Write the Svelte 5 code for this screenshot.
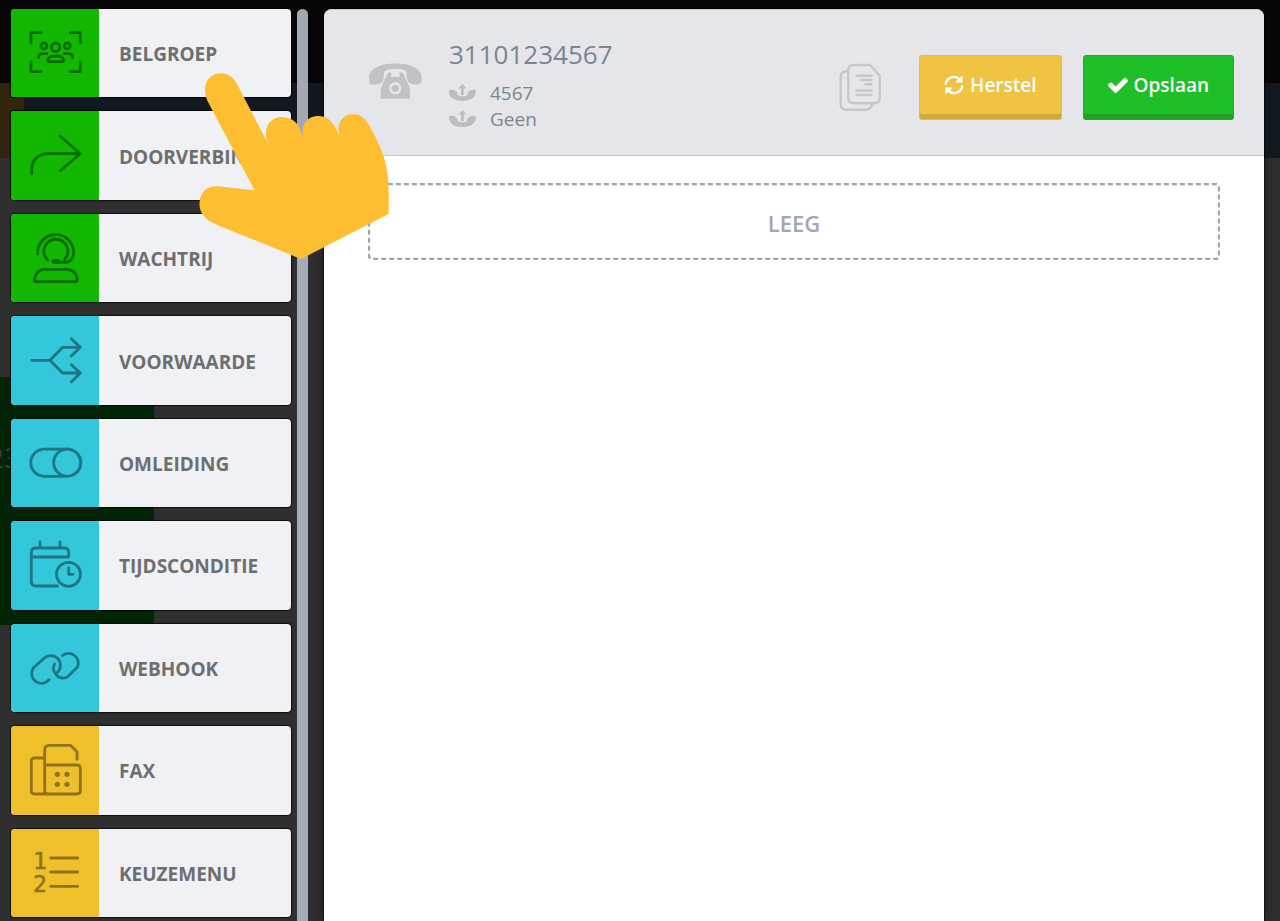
<script>
  const modules = [
    { name: 'BELGROEP', icon: 'group', color: 'green' },
    { name: 'DOORVERBINDEN', icon: 'forward', color: 'green' },
    { name: 'WACHTRIJ', icon: 'agent', color: 'green' },
    { name: 'VOORWAARDE', icon: 'split', color: 'teal' },
    { name: 'OMLEIDING', icon: 'toggle', color: 'teal' },
    { name: 'TIJDSCONDITIE', icon: 'calendar', color: 'teal' },
    { name: 'WEBHOOK', icon: 'link', color: 'teal' },
    { name: 'FAX', icon: 'fax', color: 'yellow' },
    { name: 'KEUZEMENU', icon: 'list', color: 'yellow' },
  ];

  const icons = {
    group:
      'M20 33.5V23.7H30M59.3 23.7H69.3V33.5M69.3 53V62.7H59.3M30 62.7H20V53' +
      'M30 37a3 3 0 1 0 6 0a3 3 0 1 0-6 0M53.3 37a3 3 0 1 0 6 0a3 3 0 1 0-6 0' +
      'M40.4 38.3a4.3 4.3 0 1 0 8.6 0a4.3 4.3 0 1 0-8.6 0' +
      'M27.7 48.7C27.7 46 29 44.7 31.5 44.7H36M53.4 44.7H57.9C60.4 44.7 61.7 46 61.7 48.7' +
      'M38 52.7C36.5 52.7 36.5 51.5 37 50.5C38 48 39.5 47.2 42 47.2H47.5C50 47.2 51.5 48 52.5 50.5C53 51.5 53 52.7 51.5 52.7Z',
    forward: 'M20.7 61.5V57.5C20.7 48 27.7 41.7 37.3 41.7H69.3M49.3 24.3L69.3 41.7L49.3 58.7',
    agent:
      'M26.7 39.8A18 18 0 1 1 62.7 37.7C62.7 44.5 59 48.3 54 48.3H46' +
      'M36.7 46A12 12 0 1 1 53.5 45.6' +
      'M25 67.7C23.5 67.7 23.2 66.5 23.5 65C24.7 58.5 28.5 55.3 34 55.3H55.7C61 55.3 65 58.5 66.2 65C66.5 66.5 66 67.7 64.7 67.7Z',
    split:
      'M20.7 43.3H39L51.7 30.3H69.3M60.3 21.7L69.3 30.3L60.3 39' +
      'M39 43.3L51.7 56H69.3M60.3 47.7L69.3 56L60.3 65',
    toggle:
      'M33.4 30.1H56A13.6 13.6 0 0 1 56 57.3H33.4A13.6 13.6 0 0 1 33.4 30.1Z' +
      'M42.7 43.7a13.6 13.6 0 1 0 27.2 0a13.6 13.6 0 1 0-27.2 0',
    calendar:
      'M46.5 65H25C22 65 20.3 63.5 20.3 60.5V31.5C20.3 28.5 22 27 25 27H53C56 27 57.7 28.5 57.7 31.5V36H20.3' +
      'M29 21V27M49 21V27M45.5 53.3a12 12 0 1 0 24 0a12 12 0 1 0-24 0M57.7 47V53.3H62',
    link:
      'M38 55.7A9.7 9.7 0 0 1 22.8 43.5L33.1 34.2A9.7 9.7 0 0 1 46.5 48.3' +
      'M51.5 31.5A9.7 9.7 0 0 1 66.3 43.3L56.3 53A9.7 9.7 0 0 1 43.5 40',
    fax:
      'M33.7 32H23.5C21.5 32 20.3 33.2 20.3 35.2V64.8C20.3 66.8 21.5 68 23.5 68H65.8C67.8 68 69.3 66.8 69.3 64.8V42.2C69.3 40.2 67.8 39 65.8 39H33.7' +
      'M37 68C35 68 33.7 66.5 33.7 64.5V24C33.7 21 35.5 19.3 38.5 19.3H59.5L66 25.7V33.3',
    list: 'M39.7 29H66.7M39.7 43H66.7M39.7 57.3H66.7',
  };

  const faxDots = [[46.3, 48.3], [56, 48.3], [46.3, 58.3], [56, 58.3]];

  const number = '31101234567';
  const extensions = ['4567', 'Geen'];
</script>

<div class="app">
  <div class="backdrop" aria-hidden="true">
    <div class="tab"></div>
    <div class="tile">23</div>
  </div>

  <aside>
    <div class="modules">
      {#each modules as item}
        <button class="module">
          <span class="tileicon {item.color}">
            <svg viewBox="0 0 88 88">
              <path d={icons[item.icon]} />
              {#if item.icon === 'agent'}
                <ellipse class="solid" cx="45" cy="47.3" rx="4.5" ry="2.6" />
              {:else if item.icon === 'fax'}
                {#each faxDots as [x, y]}
                  <circle class="solid" cx={x} cy={y} r="2.6" />
                {/each}
              {:else if item.icon === 'list'}
                <text x="22" y="40">1</text>
                <text x="22" y="63">2</text>
              {/if}
            </svg>
          </span>
          <span class="name">{item.name}</span>
        </button>
      {/each}
    </div>
    <div class="scrollbar"></div>
  </aside>

  <main>
    <header>
      <svg class="phone" viewBox="0 0 54 36">
        <path d="M1 15C1 5 13 .5 27.3 .5S53.7 5 53.7 15C53.7 19.5 53 21.5 50 21.5C44 21.5 39.5 20.5 39 16L38.5 9.5C38 7 34 6 27.3 6S16.500 7 16 9.5L15.5 16C15 20.5 10.5 21.5 4.5 21.5C1.5 21.5 1 19.5 1 15Z" />
        <path fill-rule="evenodd" d="M20 9.5H23.2V14H31.500V9.5H34.7L41 23C41.8 25 42 26.5 42 28.5V35.7H12.7V28.5C12.7 26.5 13 25 13.7 23ZM27.3 19.2a6.200 6.200 0 1 0 .01 0ZM27.3 21.7a3.700 3.700 0 1 1-.01 0Z" />
      </svg>
      <div class="info">
        <h1>{number}</h1>
        {#each extensions as ext}
          <div class="ext">
            <svg viewBox="0 0 27 18">
              <path d="M13.4 0L17.5 4.5H14.8V11H12V4.5H9.3ZM0 8C0 6 1.2 5.5 3 5.7C6 6 8.5 7.5 8.5 10C8.5 11.8 10.5 12.3 13.5 12.3S18.5 11.8 18.5 10C18.5 7.5 21 6 24 5.7C25.8 5.5 27 6 27 8C27 13 21.5 17 13.5 17S0 13 0 8Z" />
            </svg>
            <span>{ext}</span>
          </div>
        {/each}
      </div>
      <div class="actions">
        <button class="copy" aria-label="Kopiëren">
          <svg viewBox="0 0 42 48">
            <path d="M9 8.3H7C4 8.3 1.7 10.3 1.7 13.5V41.5C1.7 44.7 4 46.7 7 46.7H27C30 46.7 32 45.5 33.5 41" />
            <path d="M14.5 2H31L40.7 12.7V35C40.7 38.2 38.5 40.2 35.5 40.2H14.5C11.5 40.2 9.3 38.2 9.3 35V7C9.3 4 11.5 2 14.5 2Z" />
            <path d="M17.5 12.7H32.5M22 17H32.5M26.5 21.3H32.5M17.5 27.5H32.5M17.5 32H32.5" />
          </svg>
        </button>
        <button class="btn reset">
          <svg viewBox="0 0 20 20">
            <path class="arc" d="M1.7 9.5A8 8 0 0 1 15.8 4.8M18.3 10.5A8 8 0 0 1 4.2 15.2" />
            <path d="M18.5 .5V7.5H11.2ZM1.5 19.5V12.5H8.8Z" />
          </svg>
          Herstel
        </button>
        <button class="btn save">
          <svg viewBox="121 240 1550 1310">
            <path d="M1671 566q0 40-28 68l-724 724-136 136q-28 28-68 28t-68-28l-136-136-362-362q-28-28-28-68t28-68l136-136q28-28 68-28t68 28l294 295 656-657q28-28 68-28t68 28l136 136q28 28 28 68z" />
          </svg>
          Opslaan
        </button>
      </div>
    </header>

    <section>
      <div class="dropzone">
        <svg><rect x="1" y="1" rx="3" /></svg>
        LEEG
      </div>
    </section>
  </main>

  <svg class="hand" viewBox="199 73 190 186">
    <path d="M207.5 101C203 91 204 78 216 74C225 71.5 232 75 237 84L268.5 144.5C262 130 268 118 281 117C290 117 296 121 299 127L304 138C300 126 306 117 317 116C325 115.5 331 119 335 127L340.5 138C335 126 341 115 352 114C359 114 364 117 368 123C376 138 382 149 385 161C389 176 389 192 388.5 214L301 259L215 224C205 220 199 212 199.5 203C200 192 207 185.5 218 186.3L254.5 190.3Z" />
  </svg>
</div>

<style>
  :global(body) {
    background: #2f2f2f;
  }

  .app {
    position: relative;
    display: flex;
    min-height: 100vh;
    overflow: hidden;
    font-family: 'Open Sans', 'Noto Sans', sans-serif;
  }

  button {
    border: none;
    font-family: inherit;
    cursor: pointer;
  }

  .backdrop {
    position: absolute;
    inset: 0;
    background: linear-gradient(#070707 83px, #121a20 83px, #121a20 158px, #2f2f2f 158px);
  }

  .tab {
    position: absolute;
    top: 83px;
    left: 0;
    width: 24px;
    height: 75px;
    background: #33240d;
  }

  .tile {
    position: absolute;
    top: 377px;
    left: 0;
    width: 154px;
    height: 248px;
    background: #022508;
    color: #30403a;
    font-size: 28px;
    line-height: 160px;
    text-indent: -12px;
  }

  aside {
    position: relative;
    display: flex;
    gap: 6px;
    padding: 9px 16px 0 11px;
  }

  .modules {
    display: grid;
    grid-auto-rows: 1fr;
    gap: 14px;
    width: 280px;
    padding-bottom: 4px;
  }

  .module {
    display: flex;
    align-items: stretch;
    min-height: 88px;
    padding: 0;
    border-radius: 4px;
    background: #f0f1f4;
    box-shadow: 0 0 1px 1px rgba(0, 0, 0, 0.7);
    overflow: hidden;
    text-align: left;
  }

  .tileicon {
    display: flex;
    align-items: center;
    width: 88px;
  }

  .green { background: #12b700; }
  .teal { background: #32c7da; }
  .yellow { background: #f0c02c; }

  .tileicon svg {
    width: 88px;
    height: 88px;
    fill: none;
    stroke: #000;
    stroke-width: 2.8;
    stroke-linecap: round;
    stroke-linejoin: round;
    opacity: 0.4;
  }

  .tileicon .solid {
    fill: #000;
    stroke: none;
  }

  .tileicon text {
    fill: #000;
    stroke-width: 0.6;
    font: 23px 'DejaVu Sans Mono', monospace;
  }

  .name {
    align-self: center;
    padding: 2px 0 0 20px;
    color: #6c6e70;
    font-size: 19px;
    font-weight: 700;
    line-height: 26px;
  }

  .scrollbar {
    width: 11px;
    border-radius: 6px 6px 0 0;
    background: rgba(180, 186, 196, 0.9);
  }

  main {
    position: relative;
    flex: 1;
    margin: 9px 16px 0 0;
    border-radius: 8px 8px 0 0;
    background: #fff;
    box-shadow: 0 0 12px rgba(0, 0, 0, 0.5), 0 0 0 1px rgba(0, 0, 0, 0.5);
  }

  header {
    display: flex;
    align-items: center;
    padding: 24px 30px 23px 44px;
    border-top: 1px solid #cdced1;
    border-bottom: 1px solid #c5c7ca;
    border-radius: 8px 8px 0 0;
    background: #e4e6ea;
  }

  .phone {
    width: 54px;
    height: 36px;
    margin-bottom: 4px;
    fill: #c0c2c6;
  }

  .info {
    flex: 1;
    padding-left: 27px;
    color: #7b8590;
  }

  h1 {
    margin: 0 0 6px;
    font-size: 26px;
    font-weight: 400;
    line-height: 40px;
  }

  .ext {
    display: flex;
    align-items: center;
    gap: 14px;
    font-size: 19px;
    line-height: 26px;
  }

  .ext svg {
    width: 27px;
    height: 18px;
    fill: #bcbdc0;
  }

  .actions {
    display: flex;
    align-items: center;
    margin-top: 8px;
  }

  .copy {
    margin-right: 38px;
    padding: 0;
    background: none;
  }

  .copy svg {
    display: block;
    width: 42px;
    height: 48px;
    fill: none;
    stroke: #c5c7cb;
    stroke-width: 2.4;
    stroke-linecap: round;
  }

  .btn {
    display: flex;
    align-items: center;
    gap: 6px;
    padding: 17px 25px 22px;
    border-radius: 4px;
    color: #fff;
    font-size: 19px;
    font-weight: 600;
    line-height: 26px;
  }

  .btn svg {
    width: 20px;
    height: 20px;
    fill: #fff;
  }

  .btn .arc {
    fill: none;
    stroke: #fff;
    stroke-width: 2.4;
  }

  .reset {
    margin-right: 21px;
    background: #f0c342;
    box-shadow: inset 0 0 0 1px #f0bc2c, inset 0 -6px #cfa93b;
  }

  .save {
    background: #1ebf27;
    box-shadow: inset 0 0 0 1px #12b51c, inset 0 -6px #1ca524;
  }

  section {
    padding: 27px 44px;
  }

  .dropzone {
    position: relative;
    padding: 25px 0 22px;
    color: #a3a5b0;
    font-size: 22px;
    font-weight: 600;
    line-height: 30px;
    text-align: center;
  }

  .dropzone svg {
    position: absolute;
    inset: 0;
    width: 100%;
    height: 100%;
  }

  .dropzone rect {
    width: calc(100% - 2px);
    height: calc(100% - 2px);
    fill: none;
    stroke: #a3a3ad;
    stroke-width: 2.4;
    stroke-dasharray: 5 3;
  }

  .hand {
    position: absolute;
    top: 73px;
    left: 199px;
    width: 190px;
    height: 186px;
    fill: #fdbe31;
    pointer-events: none;
  }
</style>
